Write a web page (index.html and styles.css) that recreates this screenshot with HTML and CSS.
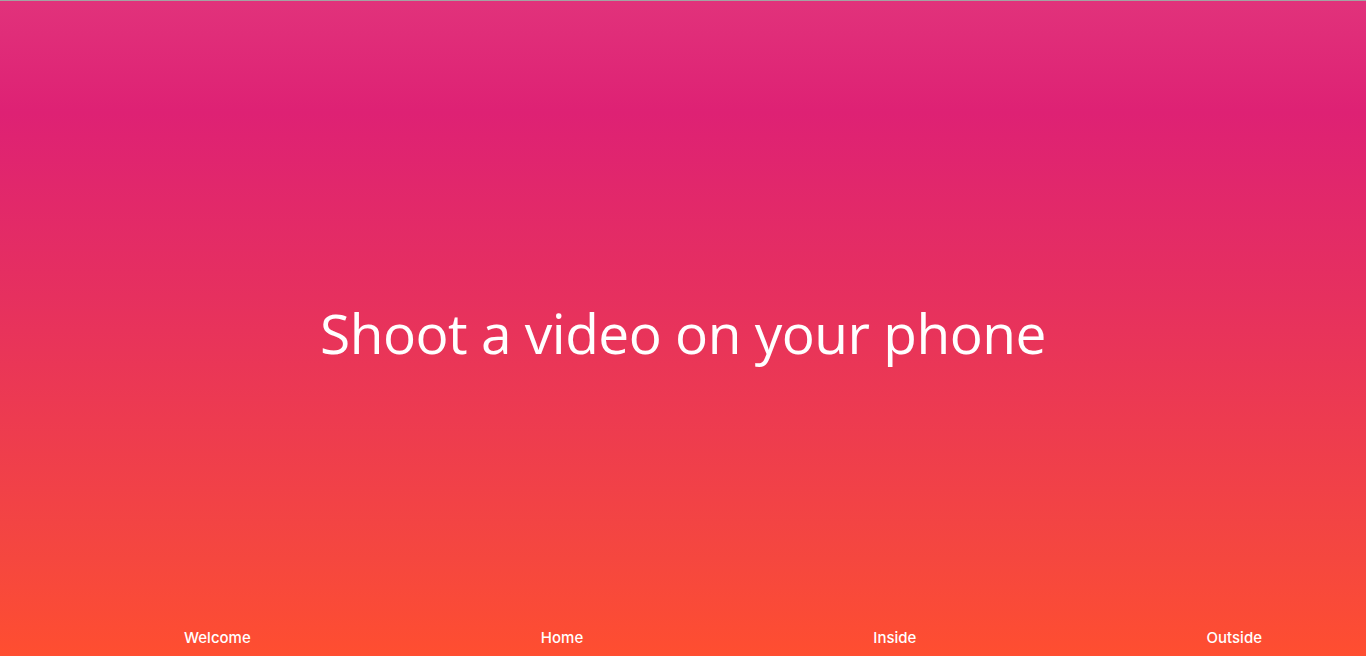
FILE: index.html
```html
<!DOCTYPE html>
<html lang="en">
<head>
<meta charset="utf-8">
<title>Shoot a video on your phone</title>
<link rel="stylesheet" href="styles.css">
</head>
<body>
<div class="page">
  <main class="hero">
    <h1 class="title">Shoot a video on your phone</h1>
  </main>
  <nav class="nav">
    <a class="nav-link" href="#">Welcome</a>
    <a class="nav-link" href="#">Home</a>
    <a class="nav-link" href="#">Inside</a>
    <a class="nav-link" href="#">Outside</a>
  </nav>
</div>
</body>
</html>
```
FILE: styles.css
```css
html, body {
  margin: 0;
  padding: 0;
  height: 100%;
}
body {
  overflow: hidden;
}
.page {
  height: 656px;
  box-sizing: border-box;
  border-top: 1px solid #a3a3a3;
  display: flex;
  flex-direction: column;
  background: linear-gradient(to bottom, #e1327b 0%, #de2174 17%, #e6305f 45%, #f5473f 85%, #ff4e30 100%);
}
.hero {
  flex: 1;
  display: flex;
  align-items: center;
  justify-content: center;
  padding-top: 34px;
}
.title {
  margin: 0;
  font-family: "Open Sans", "Noto Sans", sans-serif;
  font-weight: 400;
  font-size: 55px;
  letter-spacing: -0.5px;
  color: #ffffff;
}
.nav {
  display: flex;
  justify-content: space-between;
  padding: 0 104px 9px 184px;
}
.nav-link {
  font-family: Inter, Roboto, sans-serif;
  font-size: 15px;
  font-weight: 500;
  color: #ffffff;
  text-decoration: none;
  line-height: 18px;
}
```
